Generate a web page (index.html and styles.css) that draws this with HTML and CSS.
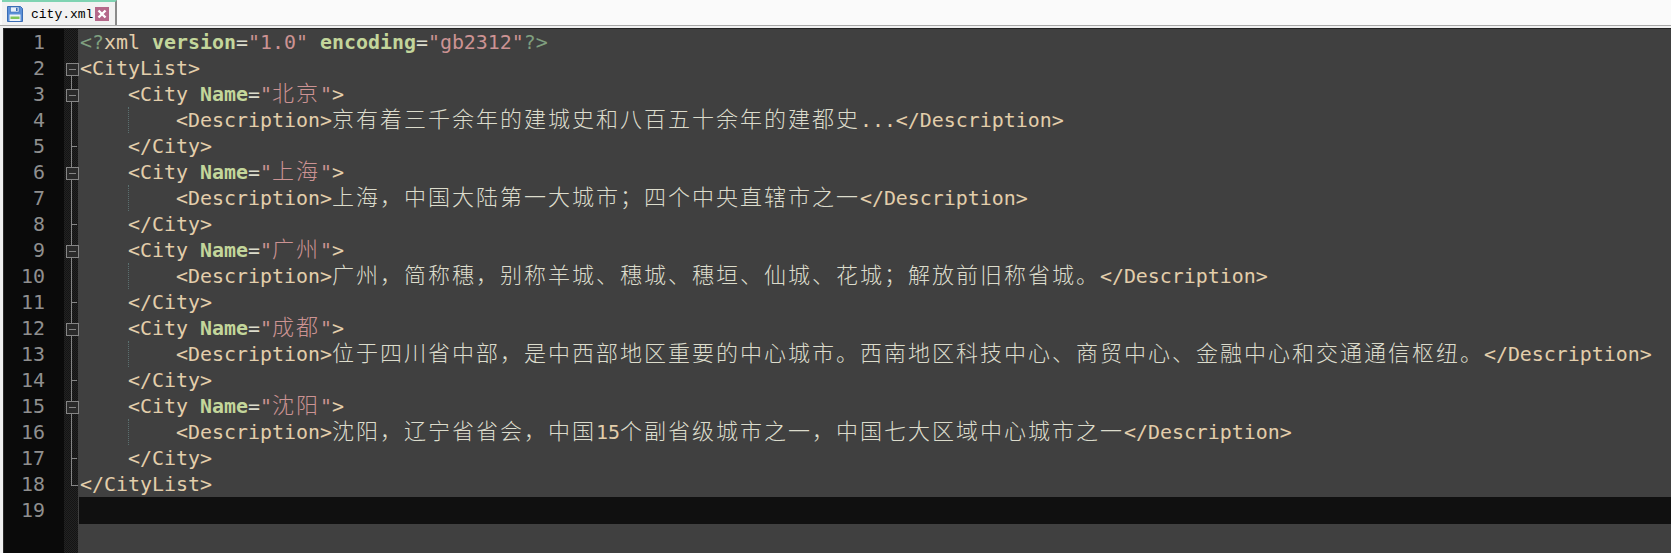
FILE: index.html
```html
<!DOCTYPE html>
<html lang="zh-CN">
<head>
<meta charset="utf-8">
<title>city.xml</title>
<link rel="stylesheet" href="styles.css">
</head>
<body>
<header class="tabbar">
  <div class="tab">
    <svg class="save" viewBox="0 0 16 16" width="16" height="16"><path d="M.5.5h13l2 2v13H.5z" fill="#5c90d8" stroke="#3a6db5"/><rect x="3.5" y="1" width="8.5" height="5" fill="#e8f0fa" stroke="#3a6db5" stroke-width=".6"/><rect x="9" y="1.8" width="1.6" height="3.2" fill="#3a6db5"/><rect x="2.5" y="8.5" width="11" height="6.5" fill="#eef3f8"/><rect x="3.5" y="10.5" width="9" height="2.5" fill="#7fc65a"/></svg>
    <span class="tabname">city.xml</span>
    <svg class="close" viewBox="0 0 14 14" width="14" height="14"><rect width="14" height="14" fill="#b5688a"/><path d="M3.5 3.5l7 7M10.5 3.5l-7 7" stroke="#fff" stroke-width="2.4"/></svg>
  </div>
</header>
<main class="editor">
  <div class="row"><span class="num">1</span><span class="fold"></span><span class="code"><i class="pi">&lt;?</i><b class="t">xml</b> <b class="a">version</b><i class="p">=</i><i class="s">"1.0"</i> <b class="a">encoding</b><i class="p">=</i><i class="s">"gb2312"</i><i class="pi">?&gt;</i></span></div>
  <div class="row"><span class="num">2</span><span class="fold box first"></span><span class="code">&lt;CityList&gt;</span></div>
  <div class="row"><span class="num">3</span><span class="fold box"></span><span class="code">    &lt;City <b class="a">Name</b><i class="p">=</i><i class="s">"<span class="zh">北京</span>"</i>&gt;</span></div>
  <div class="row"><span class="num">4</span><span class="fold line"></span><span class="code guide">        &lt;Description&gt;<span class="zh">京有着三千余年的建城史和八百五十余年的建都史</span>...&lt;/Description&gt;</span></div>
  <div class="row"><span class="num">5</span><span class="fold tick"></span><span class="code">    &lt;/City&gt;</span></div>
  <div class="row"><span class="num">6</span><span class="fold box"></span><span class="code">    &lt;City <b class="a">Name</b><i class="p">=</i><i class="s">"<span class="zh">上海</span>"</i>&gt;</span></div>
  <div class="row"><span class="num">7</span><span class="fold line"></span><span class="code guide">        &lt;Description&gt;<span class="zh">上海，中国大陆第一大城市；四个中央直辖市之一</span>&lt;/Description&gt;</span></div>
  <div class="row"><span class="num">8</span><span class="fold tick"></span><span class="code">    &lt;/City&gt;</span></div>
  <div class="row"><span class="num">9</span><span class="fold box"></span><span class="code">    &lt;City <b class="a">Name</b><i class="p">=</i><i class="s">"<span class="zh">广州</span>"</i>&gt;</span></div>
  <div class="row"><span class="num">10</span><span class="fold line"></span><span class="code guide">        &lt;Description&gt;<span class="zh">广州，简称穗，别称羊城、穗城、穗垣、仙城、花城；解放前旧称省城。</span>&lt;/Description&gt;</span></div>
  <div class="row"><span class="num">11</span><span class="fold tick"></span><span class="code">    &lt;/City&gt;</span></div>
  <div class="row"><span class="num">12</span><span class="fold box"></span><span class="code">    &lt;City <b class="a">Name</b><i class="p">=</i><i class="s">"<span class="zh">成都</span>"</i>&gt;</span></div>
  <div class="row"><span class="num">13</span><span class="fold line"></span><span class="code guide">        &lt;Description&gt;<span class="zh">位于四川省中部，是中西部地区重要的中心城市。西南地区科技中心、商贸中心、金融中心和交通通信枢纽。</span>&lt;/Description&gt;</span></div>
  <div class="row"><span class="num">14</span><span class="fold tick"></span><span class="code">    &lt;/City&gt;</span></div>
  <div class="row"><span class="num">15</span><span class="fold box"></span><span class="code">    &lt;City <b class="a">Name</b><i class="p">=</i><i class="s">"<span class="zh">沈阳</span>"</i>&gt;</span></div>
  <div class="row"><span class="num">16</span><span class="fold line"></span><span class="code guide">        &lt;Description&gt;<span class="zh">沈阳，辽宁省省会，中国</span>15<span class="zh">个副省级城市之一，中国七大区域中心城市之一</span>&lt;/Description&gt;</span></div>
  <div class="row"><span class="num">17</span><span class="fold tick"></span><span class="code">    &lt;/City&gt;</span></div>
  <div class="row"><span class="num">18</span><span class="fold end"></span><span class="code">&lt;/CityList&gt;</span></div>
  <div class="row current"><span class="num">19</span><span class="fold"></span><span class="code"></span></div>
  <div class="row rest"><span class="num"></span><span class="fold"></span><span class="code"></span></div>
</main>
</body>
</html>
```
FILE: styles.css
```css
* { box-sizing: border-box; }
html, body { margin: 0; height: 100%; }
body {
  width: 1671px;
  height: 553px;
  overflow: hidden;
  background: #f0f0f0;
  display: flex;
  flex-direction: column;
}
.tabbar {
  height: 26px;
  flex: none;
  background: #fafafa;
  border-bottom: 1px solid #a8a8a8;
  padding-left: 2px;
}
.tab {
  width: 115px;
  height: 25px;
  background: #f2f2f2;
  border-top: 2px solid #7fd3b2;
  border-right: 2px solid #8a8a8a;
  display: flex;
  align-items: center;
  padding: 1px 0 0 5px;
}
.save { flex: none; }
.tabname {
  font: 13px/1 "Liberation Mono", monospace;
  color: #000;
  margin: 1px 0 0 8px;
  width: 64px;
  flex: none;
}
.close { flex: none; }
.editor {
  flex: 1;
  margin: 2px 0 0 3px;
  background: #404040;
  border-top: 1px solid #222;
  border-left: 1px solid #2a2a2a;
  display: flex;
  flex-direction: column;
  font: 19.93px/26px "DejaVu Sans Mono", "Noto Sans CJK SC", monospace;
  color: #e3ceab;
}
.row {
  height: 26px;
  flex: none;
  display: grid;
  grid-template-columns: 60px 14px 1fr;
}
.rest { flex: 1; height: auto; }
.num {
  background: #0a0a0a;
  color: #8f8f8f;
  text-align: right;
  padding: 1px 19px 0 0;
}
.fold {
  position: relative;
  background: #1a1a1a repeating-conic-gradient(#141414 0 25%, #222 0 50%) 0 0 / 2px 2px;
}
.code {
  white-space: pre;
  padding: 1px 0 0 1px;
  margin-left: 1px;
  position: relative;
}
.current .code { background: #101010; }
i { font-style: normal; }
.pi { color: #7f9f7f; }
.t { color: #e3ceab; font-weight: normal; }
.a { color: #c3d69b; font-weight: bold; }
.p { color: #dcdccc; }
.s { color: #cc9393; }
.zh {
  font-family: "Noto Sans CJK SC", sans-serif;
  font-size: 22px;
  font-weight: 300;
  letter-spacing: 2px;
  color: #dcdccc;
  line-height: 0;
}
.s .zh { color: #cc9393; }
.guide::before {
  content: "";
  position: absolute;
  left: 49px;
  top: 0;
  height: 26px;
  border-left: 1px dotted #5a7070;
}
/* fold margin markers */
.box::before {
  content: "";
  position: absolute;
  left: 2px;
  top: 8px;
  width: 11px;
  height: 11px;
  border: 1px solid #858585;
  background: linear-gradient(#858585, #858585) center / 7px 1px no-repeat, #2a2a2a;
  z-index: 1;
}
.box::after, .line::after, .tick::after {
  content: "";
  position: absolute;
  left: 7px;
  top: 0;
  bottom: 0;
  border-left: 1px solid #858585;
}
.box.first::after { top: 19px; }
.tick::before {
  content: "";
  position: absolute;
  left: 7px;
  top: 13px;
  width: 6px;
  border-top: 1px solid #858585;
}
.end::before {
  content: "";
  position: absolute;
  left: 7px;
  top: 0;
  width: 6px;
  height: 14px;
  border-left: 1px solid #858585;
  border-bottom: 1px solid #858585;
}
```
